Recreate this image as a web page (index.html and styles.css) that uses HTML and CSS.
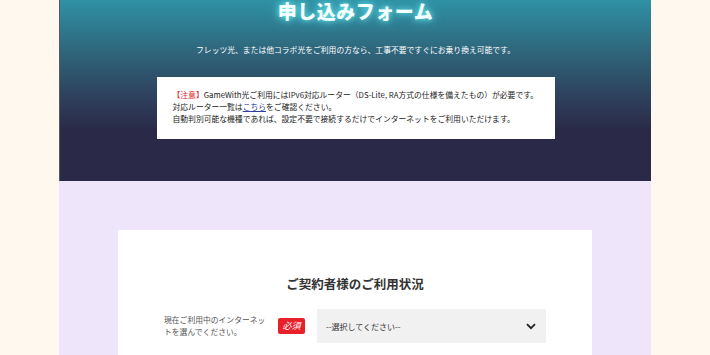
FILE: index.html
```html
<!DOCTYPE html>
<html lang="ja">
<head>
    <meta charset="UTF-8">
    <meta name="viewport" content="width=device-width, initial-scale=1.0">
    <title>申し込みフォーム</title>
    <link rel="stylesheet" href="styles.css">
</head>
<body>
    <div class="page">
        <div class="hero">
            <h1 class="hero-title">申し込みフォーム</h1>
            <p class="hero-lead">フレッツ光、または他コラボ光をご利用の方なら、工事不要ですぐにお乗り換え可能です。</p>
            <div class="notice">
                <p><span class="notice-label">【注意】</span>GameWith光ご利用にはIPv6対応ルーター（DS-Lite, RA方式の仕様を備えたもの）が必要です。</p>
                <p>対応ルーター一覧は<a href="#" class="notice-link">こちら</a>をご確認ください。</p>
                <p>自動判別可能な機種であれば、設定不要で接続するだけでインターネットをご利用いただけます。</p>
            </div>
        </div>
        <div class="form-area">
            <div class="card">
                <h2 class="card-title">ご契約者様のご利用状況</h2>
                <div class="form-row">
                    <div class="form-label">現在ご利用中のインターネットを選んでください。</div>
                    <span class="badge">必須</span>
                    <div class="select">
                        <span>--選択してください--</span>
                        <svg class="chevron" width="10" height="7" viewBox="0 0 10 7"><path d="M1 1.2 L5 5.2 L9 1.2" fill="none" stroke="#222" stroke-width="1.8"/></svg>
                    </div>
                </div>
            </div>
        </div>
    </div>
</body>
</html>
```

FILE: styles.css
```css
body {
    margin: 0;
    padding: 0;
    background-color: #fff8ee;
    font-family: "Noto Sans CJK JP", "Noto Sans", sans-serif;
    color: #333;
}
.page {
    width: 592px;
    margin: 0 auto;
}
.hero {
    height: 181px;
    box-sizing: border-box;
    padding-top: 1px;
    background: linear-gradient(to bottom, #2f91a5 0px, #2f6b80 45px, #2e3e5a 100px, #2a2a48 130px, #2a2a48 181px);
    border-left: 1px solid #555a66;
    text-align: center;
    color: #fff;
}
.hero-title {
    margin: 0;
    font-size: 19px;
    line-height: 20px;
    font-weight: 900;
    letter-spacing: 0.5px;
    color: #f4ffff;
    text-shadow: 0 0 6px rgba(120, 255, 255, 0.9), 0 0 14px rgba(90, 230, 240, 0.6);
}
.hero-lead {
    margin: 23px 0 0;
    font-size: 7.8px;
    line-height: 12px;
}
.notice {
    width: 398px;
    margin: 21px auto 0;
    box-sizing: border-box;
    padding: 12px 0 0 16px;
    height: 62px;
    background-color: #fff;
    text-align: left;
    color: #222;
    font-size: 7.8px;
    line-height: 12px;
}
.notice p {
    margin: 0;
}
.notice-label {
    color: #e0262b;
}
.notice-link {
    color: #2c3fa0;
}
.form-area {
    background-color: #eee5fb;
    padding: 49px 59px 20px;
}
.card {
    background-color: #fff;
    padding: 44px 46px 20px;
}
.card-title {
    margin: 0 0 15px;
    text-align: center;
    font-size: 12.5px;
    line-height: 20px;
    font-weight: bold;
    color: #333;
}
.form-row {
    display: flex;
    align-items: center;
}
.form-label {
    width: 104px;
    font-size: 7.8px;
    line-height: 12px;
    color: #555;
}
.badge {
    margin-left: 10px;
    width: 27px;
    height: 16px;
    line-height: 16px;
    text-align: center;
    border-radius: 2px;
    background-color: #e8202a;
    color: #fff;
    font-size: 9px;
    font-style: italic;
}
.select {
    margin-left: 12px;
    flex: 1;
    height: 34px;
    box-sizing: border-box;
    padding: 0 10px 0 9px;
    display: flex;
    align-items: center;
    justify-content: space-between;
    background-color: #f1f1f1;
    font-size: 8px;
    color: #333;
}
```
